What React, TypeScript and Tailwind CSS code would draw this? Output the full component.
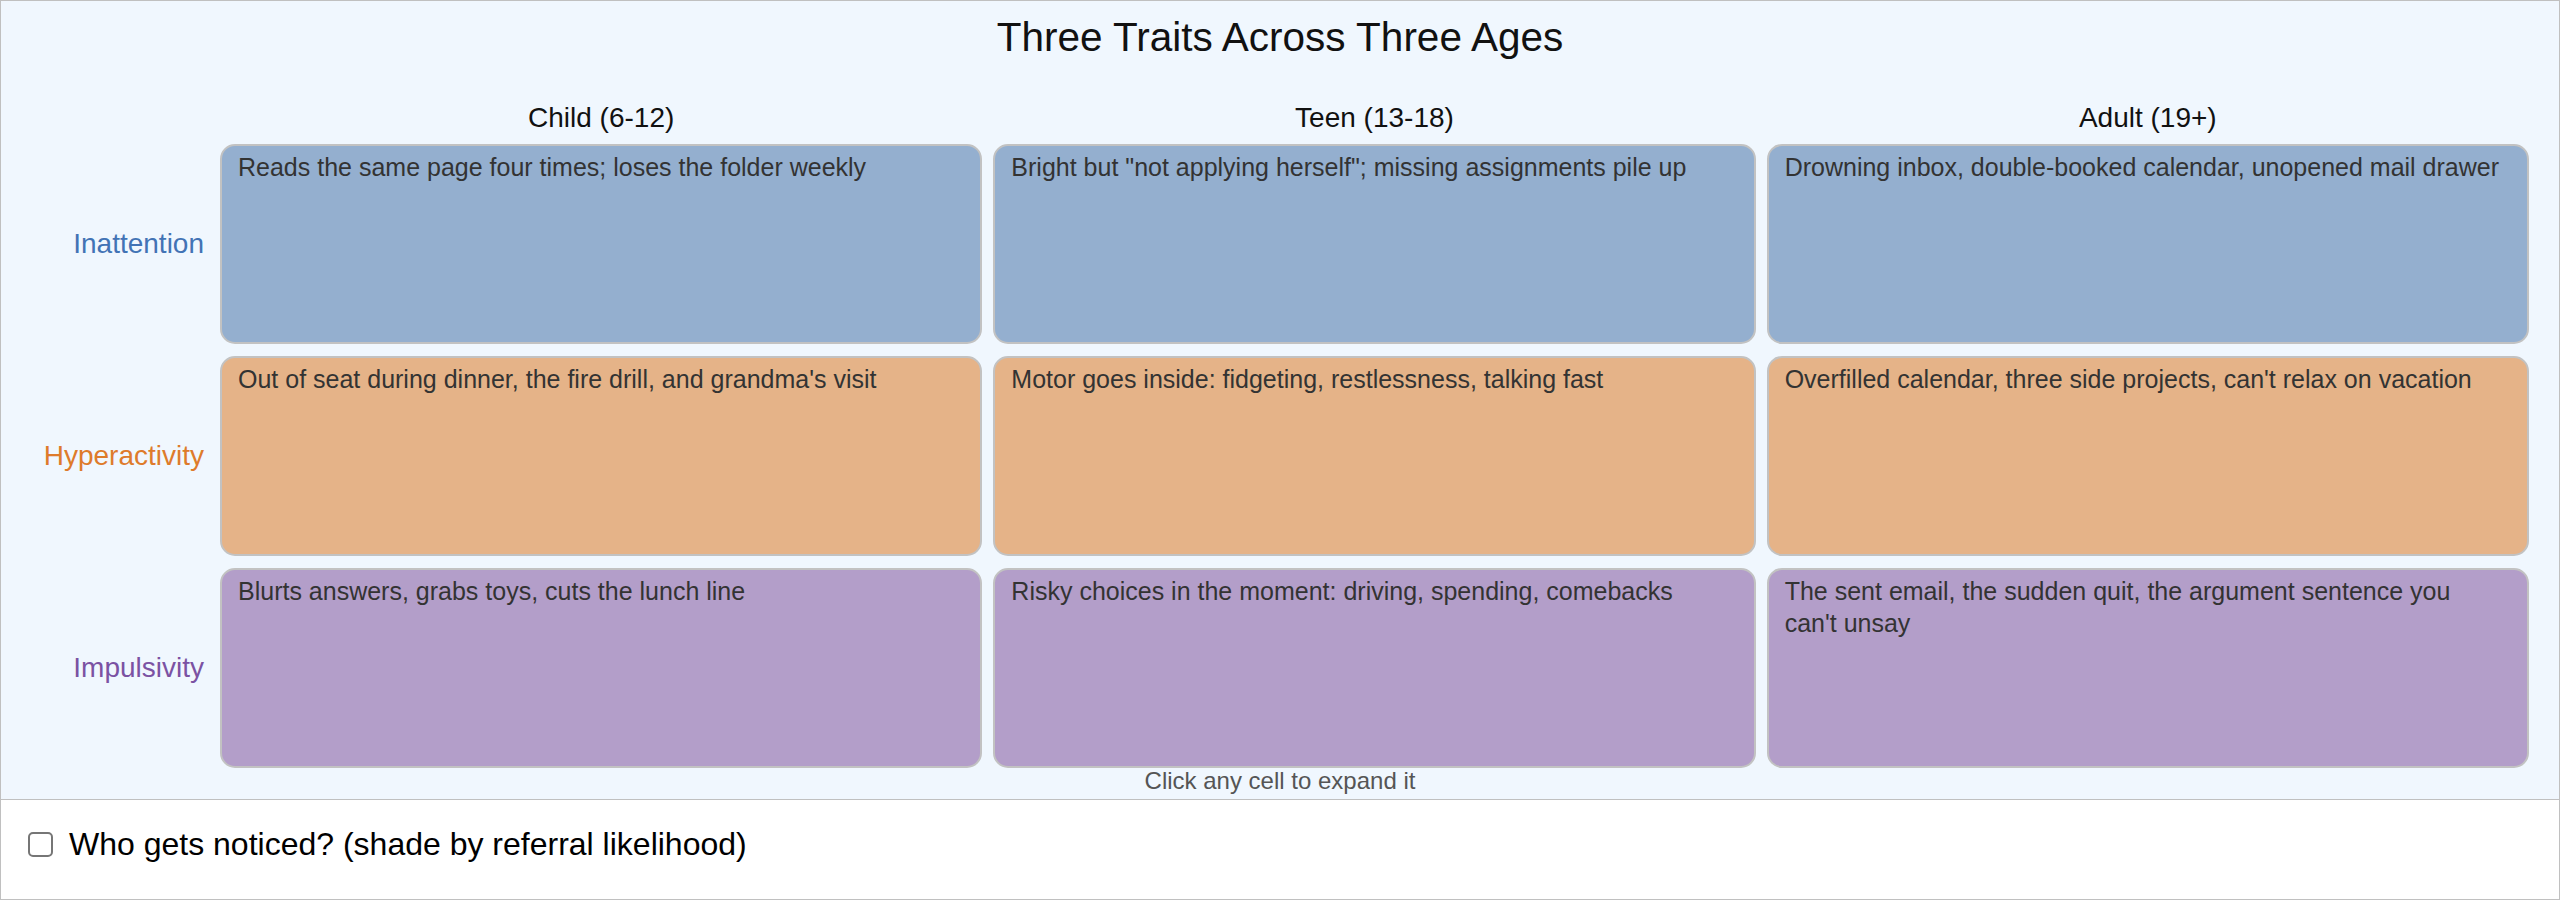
import React, { useState } from 'react';

const ages = ['Child (6-12)', 'Teen (13-18)', 'Adult (19+)'];

const traits = [
  {
    name: 'Inattention',
    label: 'text-[#4273b5]',
    cell: 'bg-[#94afcf]',
    items: [
      'Reads the same page four times; loses the folder weekly',
      'Bright but "not applying herself"; missing assignments pile up',
      'Drowning inbox, double-booked calendar, unopened mail drawer',
    ],
  },
  {
    name: 'Hyperactivity',
    label: 'text-[#de7b2b]',
    cell: 'bg-[#e5b388]',
    items: [
      "Out of seat during dinner, the fire drill, and grandma's visit",
      'Motor goes inside: fidgeting, restlessness, talking fast',
      "Overfilled calendar, three side projects, can't relax on vacation",
    ],
  },
  {
    name: 'Impulsivity',
    label: 'text-[#7b52a3]',
    cell: 'bg-[#b39ec9]',
    items: [
      'Blurts answers, grabs toys, cuts the lunch line',
      'Risky choices in the moment: driving, spending, comebacks',
      "The sent email, the sudden quit, the argument sentence you can't unsay",
    ],
  },
];

export default function App() {
  const [expanded, setExpanded] = useState<string | null>(null);
  const [shade, setShade] = useState(false);

  return (
    <div className="w-full h-[900px] border border-[#c0c0c0] bg-white font-['Liberation_Sans',Arial,sans-serif] flex flex-col">
      {/* grid panel */}
      <div className="bg-[#f0f7fe] border-b border-[#c0c0c0] pt-[13px] pb-[6px] px-[30px]">
        <h1 className="text-center text-[40.5px] leading-[46px] text-[#111]">Three Traits Across Three Ages</h1>

        <div className="grid grid-cols-[178px_1fr_1fr_1fr] gap-x-[11px] mt-[42px] mb-[10px]">
          <div />
          {ages.map((a) => (
            <div key={a} className="text-center text-[28px] leading-[32px] text-[#111]">
              {a}
            </div>
          ))}
        </div>

        <div className="grid grid-cols-[178px_1fr_1fr_1fr] gap-x-[11px] gap-y-[12px]">
          {traits.map((t) => (
            <React.Fragment key={t.name}>
              <div className={`flex items-center justify-end pr-[5px] text-[28px] ${t.label}`}>{t.name}</div>
              {t.items.map((txt, i) => {
                const id = `${t.name}-${i}`;
                return (
                  <div
                    key={id}
                    onClick={() => setExpanded(expanded === id ? null : id)}
                    className={`h-[200px] rounded-[15px] border-2 border-[#c2c2c2] pt-[5px] pl-[16px] pr-[24px] text-[25px] leading-[32px] text-[#333] cursor-pointer ${t.cell}`}
                  >
                    {txt}
                  </div>
                );
              })}
            </React.Fragment>
          ))}
        </div>

        <p className="text-center text-[24px] leading-[25px] text-[#555]">Click any cell to expand it</p>
      </div>

      {/* controls */}
      <div className="flex-1 flex items-center pl-[27px] pb-[10px]">
        <label className="flex items-center cursor-pointer">
          <input
            type="checkbox"
            checked={shade}
            onChange={(e) => setShade(e.target.checked)}
            className="appearance-none w-[25px] h-[25px] rounded-[5px] border-2 border-[#767676] bg-white checked:bg-[#0075ff] checked:border-[#0075ff]"
          />
          <span className="ml-[16px] text-[32px] leading-[37px] text-black">Who gets noticed? (shade by referral likelihood)</span>
        </label>
      </div>
    </div>
  );
}
